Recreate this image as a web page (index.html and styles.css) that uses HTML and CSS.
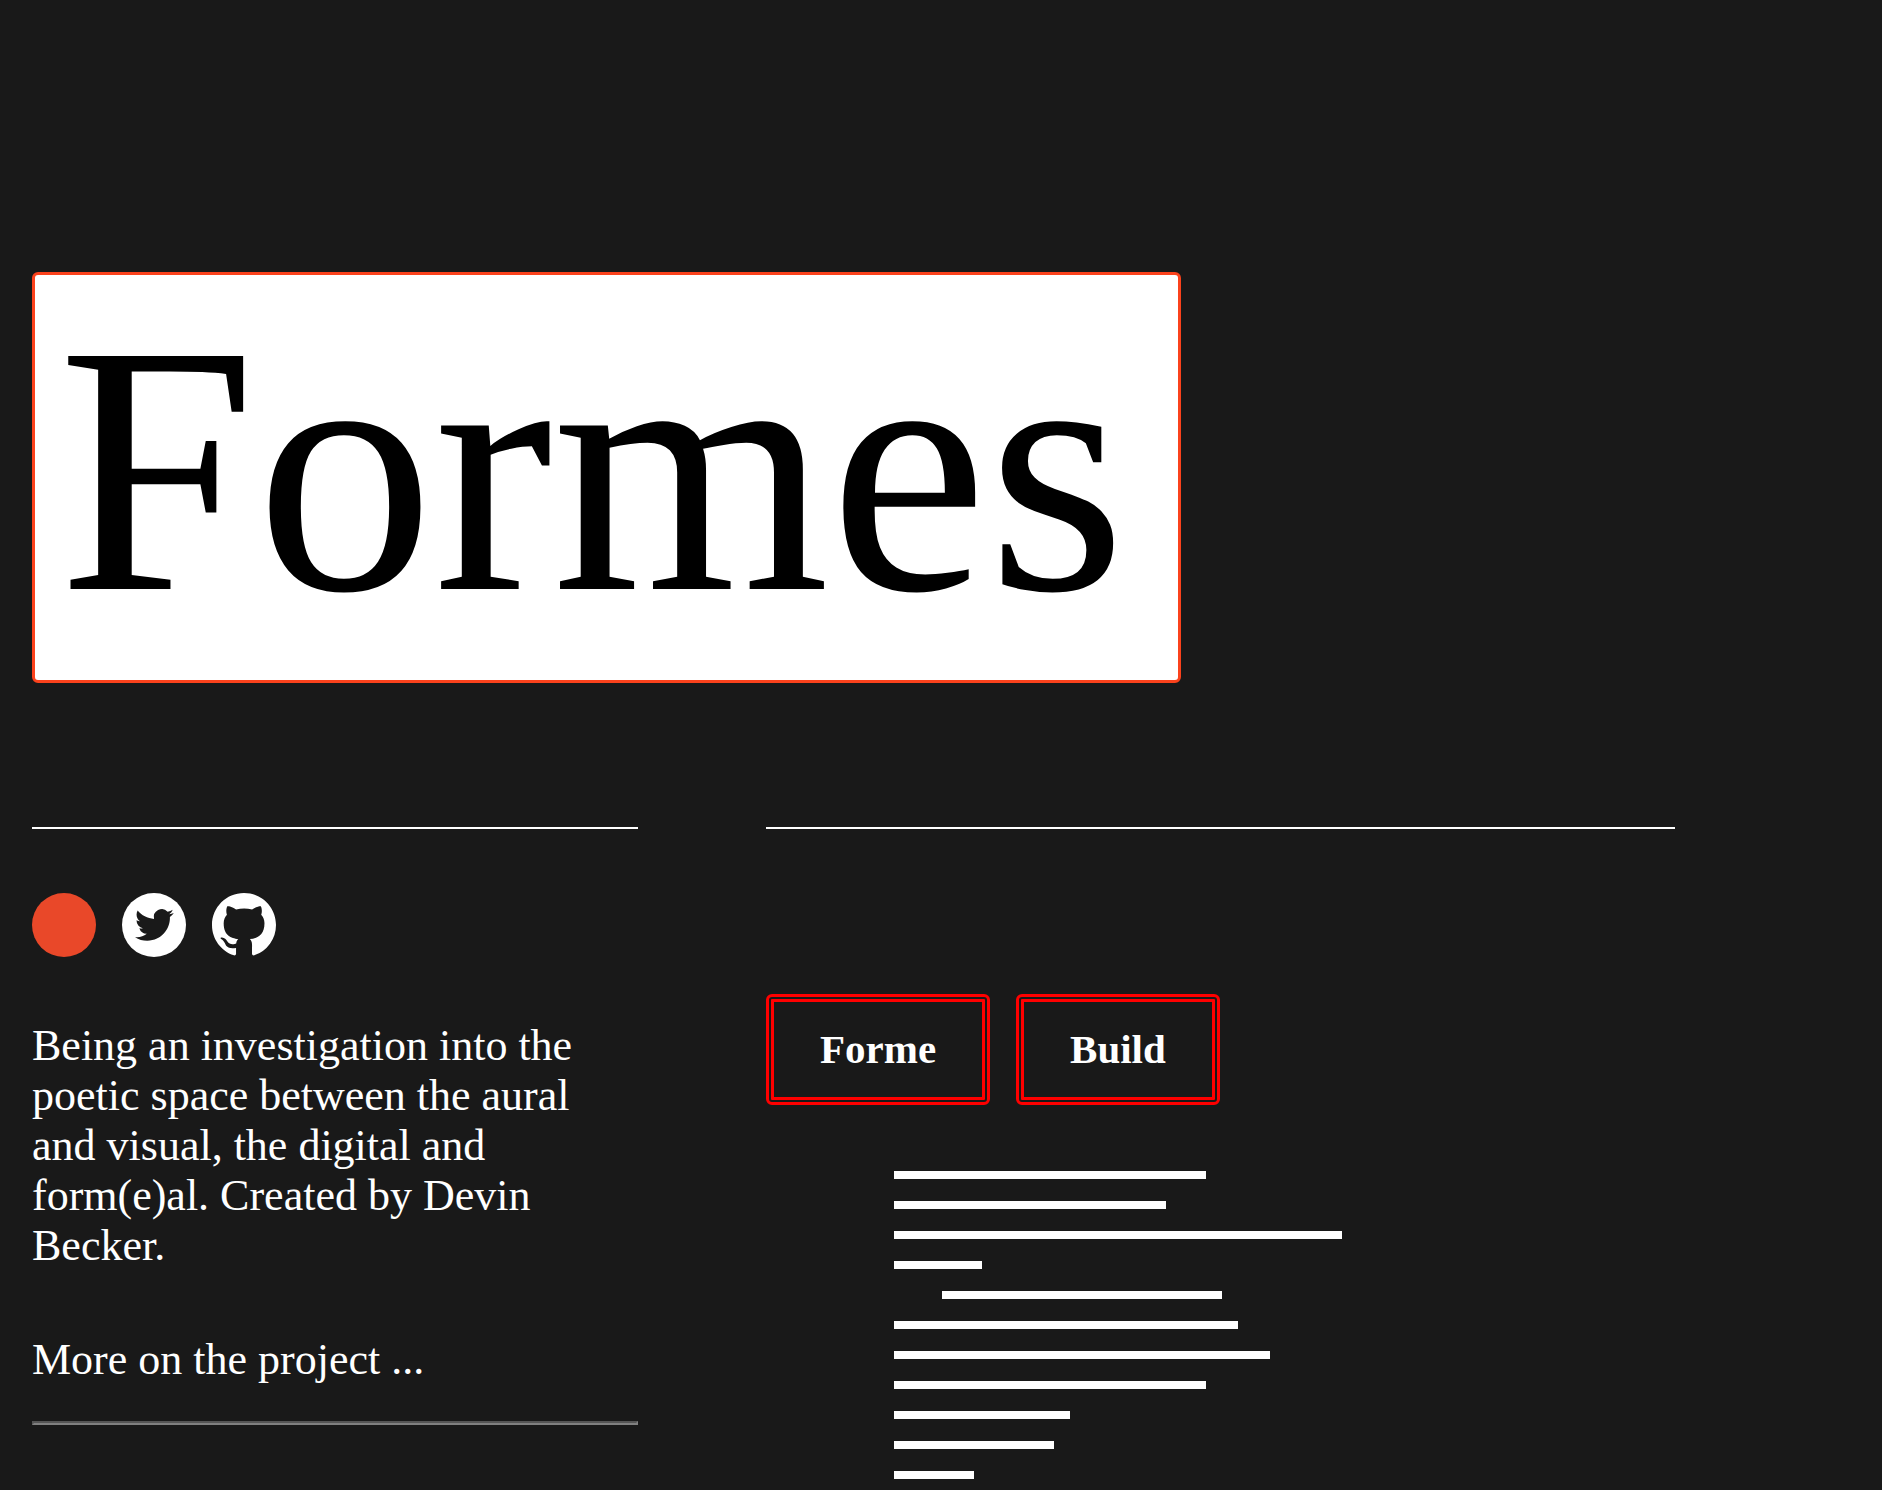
FILE: index.html
```html
<!DOCTYPE html>
<html lang="en">
<head>
  <meta charset="UTF-8" />
  <meta name="viewport" content="width=device-width, initial-scale=1" />
  <title>Formes</title>
  <link rel="stylesheet" href="styles.css">
</head>
<body>
  <header class="site-header">
    <h1 class="site-title">Formes</h1>
  </header>

  <div class="columns">
    <!-- About -->
    <aside class="about">
      <nav class="social" aria-label="Links">
        <a href="#" class="dot" aria-label="Home"></a>
        <a href="#" aria-label="Twitter">
          <svg viewBox="0 0 64 64" width="64" height="64">
            <circle cx="32" cy="32" r="32" fill="#fff" />
            <path transform="translate(13 12.5) scale(1.62)" fill="#191919" d="M23.95 4.57a10 10 0 0 1-2.82.77 4.96 4.96 0 0 0 2.16-2.72c-.95.55-2 .95-3.13 1.18a4.92 4.92 0 0 0-8.38 4.48C7.69 8.1 4.07 6.13 1.64 3.16a4.82 4.82 0 0 0-.67 2.48c0 1.71.87 3.21 2.19 4.1a4.9 4.9 0 0 1-2.23-.62v.06a4.92 4.92 0 0 0 3.95 4.83 5 5 0 0 1-2.21.08 4.94 4.94 0 0 0 4.6 3.42A9.87 9.87 0 0 1 0 19.54a13.99 13.99 0 0 0 7.55 2.21c9.05 0 14-7.5 14-13.98 0-.21 0-.42-.02-.63a9.94 9.94 0 0 0 2.42-2.57z" />
          </svg>
        </a>
        <a href="#" aria-label="GitHub">
          <svg viewBox="0 0 16 16" width="64" height="64">
            <path fill="#fff" fill-rule="evenodd" d="M8 0C3.58 0 0 3.58 0 8c0 3.54 2.29 6.53 5.47 7.59.4.07.55-.17.55-.38 0-.19-.01-.82-.01-1.49-2.01.37-2.53-.49-2.69-.94-.09-.23-.48-.94-.82-1.13-.28-.15-.68-.52-.01-.53.63-.01 1.08.58 1.23.82.72 1.21 1.87.87 2.33.66.07-.52.28-.87.51-1.07-1.78-.2-3.64-.89-3.64-3.95 0-.87.31-1.59.82-2.15-.08-.2-.36-1.02.08-2.12 0 0 .67-.21 2.2.82.64-.18 1.32-.27 2-.27s1.36.09 2 .27c1.53-1.04 2.2-.82 2.2-.82.44 1.1.16 1.92.08 2.12.51.56.82 1.27.82 2.15 0 3.07-1.87 3.75-3.65 3.95.29.25.54.73.54 1.48 0 1.07-.01 1.93-.01 2.2 0 .21.15.46.55.38A8.01 8.01 0 0 0 16 8c0-4.42-3.58-8-8-8z" />
          </svg>
        </a>
      </nav>
      <p>Being an investigation into the poetic space between the aural and visual, the digital and form(e)al. Created by Devin Becker.</p>
      <p><a href="#">More on the project ...</a></p>
      <hr>
    </aside>

    <!-- Poem -->
    <main class="work">
      <div class="actions">
        <button type="button">Forme</button>
        <button type="button">Build</button>
      </div>
      <div class="forme" aria-hidden="true">
        <div class="line" style="width: 312px"></div>
        <div class="line" style="width: 272px"></div>
        <div class="line" style="width: 448px"></div>
        <div class="line" style="width: 88px"></div>
        <div class="line indent" style="width: 280px"></div>
        <div class="line" style="width: 344px"></div>
        <div class="line" style="width: 376px"></div>
        <div class="line" style="width: 312px"></div>
        <div class="line" style="width: 176px"></div>
        <div class="line" style="width: 160px"></div>
        <div class="line" style="width: 80px"></div>
      </div>
    </main>
  </div>
</body>
</html>
```
FILE: styles.css
```css
:root {
  --bg: #191919;
  --text: #fff;
  --accent: #fb421c;
}
* { box-sizing: border-box; }
body {
  margin: 0;
  padding: 0 32px;
  background: var(--bg);
  color: var(--text);
  font-family: Georgia, 'Liberation Serif', serif;
  font-size: 44px;
  line-height: 50px;
}
a {
  color: inherit;
  text-decoration: none;
}
.site-header {
  padding-top: 272px;
  margin-bottom: 144px;
}
.site-title {
  width: fit-content;
  margin: 0;
  padding: 14px 52px 31px 23px;
  background: #fff;
  color: #000;
  border: 3px solid var(--accent);
  border-radius: 6px;
  font-size: 356px;
  font-weight: 400;
  line-height: 360px;
}
.columns {
  display: flex;
  gap: 128px;
}
.about,
.work {
  border-top: 2px solid #fff;
}
.about {
  flex: 0 0 calc(100% / 3);
  padding-top: 64px;
}
.work {
  flex: 0 0 50%;
  padding-top: 165px;
}
.social {
  display: flex;
  gap: 26px;
}
.social a,
.social svg {
  display: block;
  width: 64px;
  height: 64px;
}
.social .dot {
  background: #e94829;
  border-radius: 50%;
}
.about p {
  margin: 64px 0 0;
  padding-right: 32px;
}
.about hr {
  margin: 36px 0 0;
  border: 2px solid;
  border-color: #555 #808080 #808080 #555;
}
.actions {
  display: flex;
  gap: 26px;
}
.actions button {
  padding: 22px 46px 23px;
  background: none;
  color: inherit;
  border: 8px double #f00;
  border-radius: 6px;
  font-family: inherit;
  font-size: 41px;
  font-weight: 700;
  line-height: 50px;
  cursor: pointer;
}
.actions button:hover {
  background: #333;
}
.forme {
  display: flex;
  flex-direction: column;
  gap: 22px;
  padding: 66px 0 0 128px;
}
.line {
  height: 8px;
  background: #fff;
}
.line.indent {
  margin-left: 48px;
}
@media (max-width: 1200px) {
  .site-header {
    padding-top: 64px;
    margin-bottom: 64px;
  }
  .site-title {
    font-size: 25vw;
    line-height: 1;
  }
  .columns {
    flex-direction: column;
    gap: 64px;
  }
  .work {
    padding-top: 64px;
  }
  .forme {
    padding-left: 0;
  }
}
```
